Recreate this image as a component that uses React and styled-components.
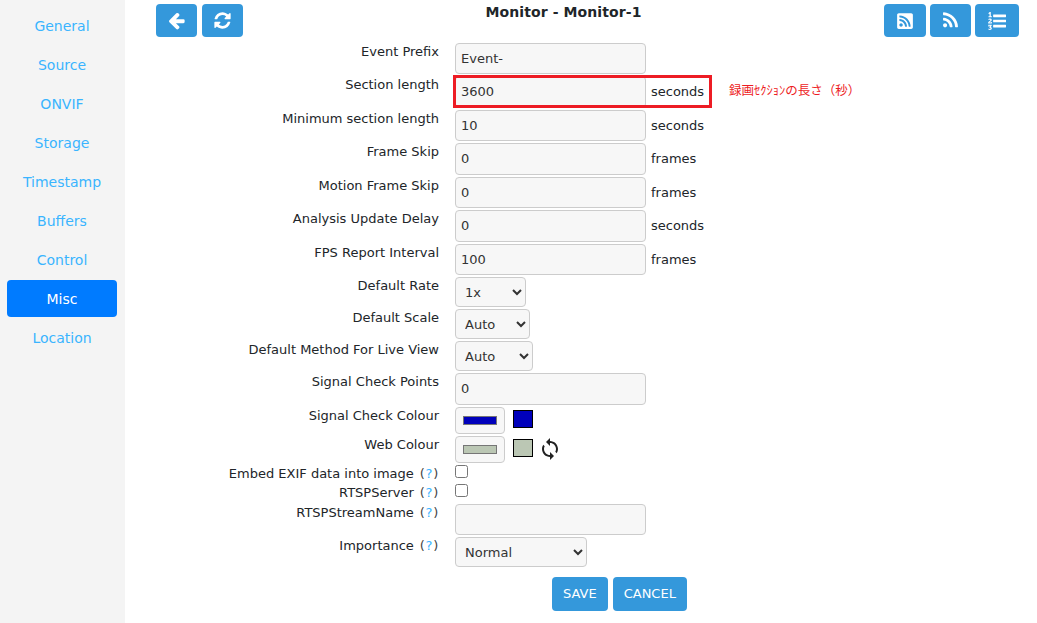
import styled, { createGlobalStyle } from 'styled-components'
import { FaRssSquare } from 'react-icons/fa'
import { MdSync } from 'react-icons/md'

const GlobalStyle = createGlobalStyle`
  html, body {
    margin: 0;
    padding: 0;
    height: 100%;
    overflow: hidden;
    background: #fff;
    font-family: "DejaVu Sans", Verdana, sans-serif;
    font-size: 13px;
    color: #212529;
  }
`

const Shell = styled.div`
  display: flex;
  height: 623px;
`

const Sidebar = styled.nav`
  width: 125px;
  flex-shrink: 0;
  background: #f4f4f4;
  padding: 7px 8px 0 7px;
  box-sizing: border-box;
  display: flex;
  flex-direction: column;
  gap: 2px;
`

const NavItem = styled.a`
  height: 37px;
  line-height: 39px;
  text-align: center;
  border-radius: 4px;
  font-size: 14px;
  color: ${({ $active }) => ($active ? '#fff' : '#3ab4ff')};
  background: ${({ $active }) => ($active ? '#007bff' : 'transparent')};
`

const Main = styled.main`
  flex: 1;
  padding-top: 4px;
`

const Header = styled.header`
  display: flex;
  justify-content: space-between;
  align-items: flex-start;
  margin: 0 18px 5.9px 31px;
  height: 33px;
`

const ButtonGroup = styled.div`
  display: flex;
  gap: ${({ $gap }) => $gap || 5}px;
`

const IconButton = styled.button`
  width: ${({ $width }) => $width || 41}px;
  height: 33px;
  border: 0;
  border-radius: 4px;
  background: #3498db;
  color: #fff;
  padding: 0;
  display: flex;
  align-items: center;
  justify-content: center;
  font-size: 18px;
`

const Title = styled.h2`
  margin: 0;
  font-size: 14px;
  line-height: 16px;
  letter-spacing: 0.1px;
  font-weight: 700;
  color: #212529;
`

const Row = styled.div`
  position: relative;
  display: grid;
  grid-template-columns: 314px 1fr;
  column-gap: 16px;
  min-height: ${({ $height }) => $height}px;
  margin-bottom: 2px;
`

const Label = styled.label`
  text-align: right;
  line-height: 16px;
  padding-top: 0.7px;
  white-space: nowrap;
`

const Help = styled.span`
  color: #444;
  margin-left: 6px;
  letter-spacing: 0.7px;
  a {
    color: #3ab4ff;
  }
`

const Value = styled.div`
  display: flex;
  align-items: ${({ $align }) => $align || 'center'};
  gap: 5px;
`

const TextInput = styled.input`
  width: 191px;
  height: 31.5px;
  box-sizing: border-box;
  border: 1px solid #ccc;
  border-radius: 4px;
  background: #f7f7f7;
  padding: 0 5px 1px;
  font: inherit;
  color: #333;
  outline: none;
`

const Select = styled.select`
  width: ${({ $width }) => $width}px;
  height: 30px;
  box-sizing: border-box;
  border: 1px solid #ccc;
  border-radius: 4px;
  background: #f7f7f7;
  padding: 0 5px;
  font: inherit;
  color: #333;
  outline: none;
`

const Unit = styled.span`
  color: #212529;
  padding-bottom: 1px;
`

const ColourInput = styled.input`
  appearance: none;
  width: 50px;
  height: 27px;
  box-sizing: border-box;
  border: 1px solid #ccc;
  border-radius: 4px;
  background: #f7f7f7;
  padding: 8px 7px;
  &::-webkit-color-swatch-wrapper {
    padding: 0;
  }
  &::-webkit-color-swatch {
    border: 1px solid #767676;
    border-radius: 0;
  }
`

const Swatch = styled.span`
  width: 20px;
  height: 18px;
  box-sizing: border-box;
  border: 1px solid #000;
  margin: 0 0 2px 3px;
  background: ${({ $colour }) => $colour};
`

const Check = styled.input`
  width: 13px;
  height: 13px;
  margin: 0;
`

const Highlight = styled.div`
  position: absolute;
  left: 328px;
  top: -1.4px;
  width: 259px;
  height: 33px;
  box-sizing: border-box;
  border: 3px solid #ed1c24;
  pointer-events: none;
`

const Note = styled.span`
  position: absolute;
  left: 604px;
  top: 6px;
  color: #ed1c24;
  font-size: 12.5px;
  line-height: 16px;
  font-family: "Noto Sans CJK JP", sans-serif;
  white-space: nowrap;
`

const Actions = styled.div`
  display: flex;
  gap: 5px;
  margin: 9.6px 0 0 427px;
`

const ActionButton = styled.button`
  height: 34px;
  padding: 0 11px;
  border: 0;
  border-radius: 4px;
  background: #3498db;
  color: #fff;
  font: inherit;
`

const navItems = ['General', 'Source', 'ONVIF', 'Storage', 'Timestamp', 'Buffers', 'Control', 'Misc', 'Location']

const textRows = [
  { label: 'Frame Skip', value: '0', unit: 'frames' },
  { label: 'Motion Frame Skip', value: '0', unit: 'frames' },
  { label: 'Analysis Update Delay', value: '0', unit: 'seconds' },
  { label: 'FPS Report Interval', value: '100', unit: 'frames' },
]

const glyphs = {
  back: 'M1664 896v128q0 53-32.5 90.5t-84.5 37.5h-704l293 294q38 36 38 90t-38 90l-75 76q-37 37-90 37-52 0-91-37l-651-652q-37-37-37-90 0-52 37-91l651-650q38-38 91-38 52 0 90 38l75 74q38 38 38 91t-38 91l-293 293h704q52 0 84.5 37.5t32.5 90.5z',
  refresh: 'M1639 1056q0 5-1 7-64 268-268 434.5t-478 166.5q-146 0-282.5-55t-243.5-157l-129 129q-19 19-45 19t-45-19-19-45v-448q0-26 19-45t45-19h448q26 0 45 19t19 45-19 45l-137 137q71 66 161 102t187 36q134 0 250-65t186-179q11-17 53-117 8-23 30-23h192q13 0 22.5 9.5t9.5 22.5zm25-800v448q0 26-19 45t-45 19h-448q-26 0-45-19t-19-45 19-45l138-138q-148-137-349-137-134 0-250 65t-186 179q-11 17-53 117-8 23-30 23h-199q-13 0-22.5-9.5t-9.5-22.5v-7q65-268 270-434.5t480-166.5q146 0 284 55.5t245 156.5l130-129q19-19 45-19t45 19 19 45z',
  rss: 'M576 1344q0 80-56 136t-136 56-136-56-56-136 56-136 136-56 136 56 56 136zm512 123q2 28-17 48-18 21-47 21h-135q-25 0-43-16.5t-20-41.5q-22-229-184.5-391.5t-391.5-184.5q-25-2-41.5-20t-16.5-43v-135q0-29 21-47 17-17 43-17h5q160 13 306 80.5t259 181.5q114 113 181.5 259t80.5 306zm512 2q2 27-18 47-18 20-46 20h-143q-26 0-44.5-17.5t-19.5-42.5q-12-215-101-408.5t-231.5-336-336-231.5-408.5-102q-25-1-42.5-19.5t-17.5-43.5v-143q0-28 20-46 18-18 44-18h3q262 13 501.5 120t425.5 294q187 186 294 425.5t120 501.5z',
  listOl: 'M381 1620q0 80-54.5 126t-135.5 46q-106 0-172-66l57-88q49 45 106 45 29 0 50.5-14.5t21.5-42.5q0-64-105-56l-26-56q8-10 32.5-43.5t42.5-54 37-38.5v-1q-16 0-48.5 1t-48.5 1v53h-106v-152h333v88l-95 115q51 12 81 49t30 88zm2-627v159h-362q-6-36-6-54 0-51 23.5-93t56.5-68 66-47.5 56.5-43.5 23.5-45q0-25-14.5-38.5t-39.5-13.5q-46 0-81 58l-85-59q24-51 71.5-79.5t105.5-28.5q73 0 123 41.5t50 112.5q0 50-34 91.5t-75 64.5-75.5 50.5-35.5 52.5h127v-60h105zm1409 319v192q0 13-9.5 22.5t-22.5 9.5h-1216q-13 0-22.5-9.5t-9.5-22.5v-192q0-14 9-23t23-9h1216q13 0 22.5 9.5t9.5 22.5zm-1408-899v99h-335v-99h107q0-41 .5-122t.5-121v-12h-2q-8 17-50 54l-71-76 136-127h106v404h108zm1408 387v192q0 13-9.5 22.5t-22.5 9.5h-1216q-13 0-22.5-9.5t-9.5-22.5v-192q0-14 9-23t23-9h1216q13 0 22.5 9.5t9.5 22.5zm0-512v192q0 13-9.5 22.5t-22.5 9.5h-1216q-13 0-22.5-9.5t-9.5-22.5v-192q0-13 9.5-22.5t22.5-9.5h1216q13 0 22.5 9.5t9.5 22.5z',
}

function Glyph({ name, size = 19 }) {
  return (
    <svg width={size} height={size} viewBox="0 0 1792 1792" fill="currentColor">
      <path d={glyphs[name]} />
    </svg>
  )
}

function HelpLink() {
  return (
    <Help>
      (<a>?</a>)
    </Help>
  )
}

function App() {
  return (
    <Shell>
      <GlobalStyle />
      <Sidebar>
        {navItems.map((item) => (
          <NavItem key={item} $active={item === 'Misc'}>
            {item}
          </NavItem>
        ))}
      </Sidebar>

      <Main>
        <Header>
          <ButtonGroup>
            <IconButton><Glyph name="back" /></IconButton>
            <IconButton><Glyph name="refresh" /></IconButton>
          </ButtonGroup>
          <Title>Monitor - Monitor-1</Title>
          <ButtonGroup $gap={4}>
            <IconButton $width={42}><FaRssSquare /></IconButton>
            <IconButton $width={41}><Glyph name="rss" /></IconButton>
            <IconButton $width={44}><Glyph name="listOl" size={18} /></IconButton>
          </ButtonGroup>
        </Header>

        <Row>
          <Label>Event Prefix</Label>
          <Value><TextInput defaultValue="Event-" /></Value>
        </Row>
        <Row>
          <Label>Section length</Label>
          <Value>
            <TextInput defaultValue="3600" />
            <Unit>seconds</Unit>
          </Value>
          <Highlight />
          <Note>録画ｾｸｼｮﾝの長さ（秒）</Note>
        </Row>
        <Row>
          <Label>Minimum section length</Label>
          <Value>
            <TextInput defaultValue="10" />
            <Unit>seconds</Unit>
          </Value>
        </Row>
        {textRows.map((row) => (
          <Row key={row.label}>
            <Label>{row.label}</Label>
            <Value>
              <TextInput defaultValue={row.value} />
              <Unit>{row.unit}</Unit>
            </Value>
          </Row>
        ))}

        <Row>
          <Label>Default Rate</Label>
          <Value>
            <Select $width={71} defaultValue="1x"><option>1x</option></Select>
          </Value>
        </Row>
        <Row>
          <Label>Default Scale</Label>
          <Value>
            <Select $width={75} defaultValue="Auto"><option>Auto</option></Select>
          </Value>
        </Row>
        <Row>
          <Label>Default Method For Live View</Label>
          <Value>
            <Select $width={78} defaultValue="Auto"><option>Auto</option></Select>
          </Value>
        </Row>
        <Row>
          <Label>Signal Check Points</Label>
          <Value><TextInput defaultValue="0" /></Value>
        </Row>
        <Row>
          <Label>Signal Check Colour</Label>
          <Value>
            <ColourInput type="color" defaultValue="#0000bb" />
            <Swatch $colour="#0000bb" />
          </Value>
        </Row>
        <Row>
          <Label>Web Colour</Label>
          <Value>
            <ColourInput type="color" defaultValue="#bbc7b4" />
            <Swatch $colour="#bbc7b4" />
            <MdSync size={24} color="#222" />
          </Value>
        </Row>
        <Row $height={17.5}>
          <Label>Embed EXIF data into image<HelpLink /></Label>
          <Value $align="flex-start"><Check type="checkbox" /></Value>
        </Row>
        <Row $height={17.5}>
          <Label>RTSPServer<HelpLink /></Label>
          <Value $align="flex-start"><Check type="checkbox" /></Value>
        </Row>
        <Row>
          <Label>RTSPStreamName<HelpLink /></Label>
          <Value><TextInput /></Value>
        </Row>
        <Row>
          <Label>Importance<HelpLink /></Label>
          <Value>
            <Select $width={132} defaultValue="Normal"><option>Normal</option></Select>
          </Value>
        </Row>

        <Actions>
          <ActionButton>SAVE</ActionButton>
          <ActionButton>CANCEL</ActionButton>
        </Actions>
      </Main>
    </Shell>
  )
}

export default App
